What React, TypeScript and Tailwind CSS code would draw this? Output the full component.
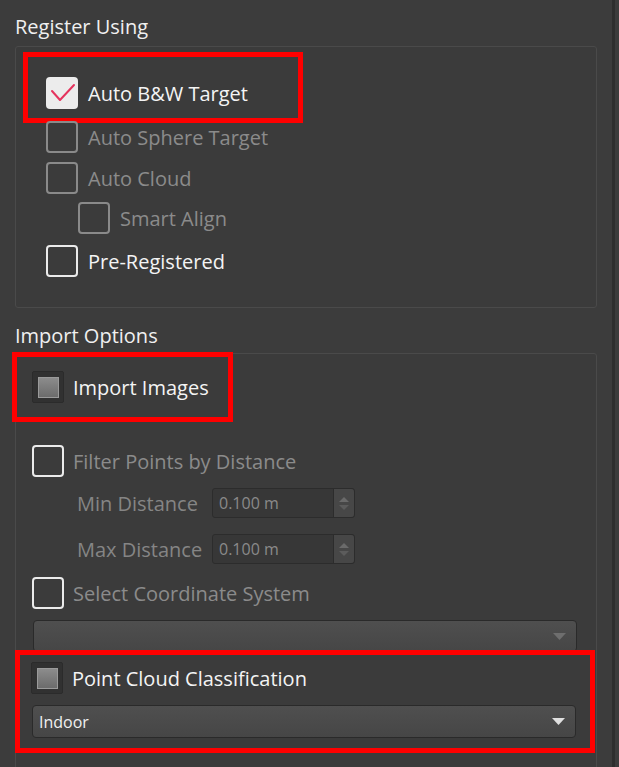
type BoxKind = "checked" | "on" | "off" | "partial";

const Box = ({ kind }: { kind: BoxKind }) => {
  if (kind === "checked") {
    return (
      <div className="w-[32px] h-[32px] shrink-0 rounded-[4px] bg-[#ececec]">
        <svg width="32" height="32" viewBox="0 0 32 32">
          <path d="M6 14 L14 23 L28 8" fill="none" stroke="#e5335d" strokeWidth="2" strokeLinecap="round" strokeLinejoin="round" />
        </svg>
      </div>
    );
  }
  if (kind === "partial") {
    return (
      <div className="w-[32px] h-[32px] shrink-0 rounded-[2px] bg-[#313131] border border-[#2b2b2b] flex items-center justify-center">
        <div className="w-[21px] h-[21px] border border-[#9a9a9a] bg-gradient-to-b from-[#8c8c8c] to-[#6c6c6c]" />
      </div>
    );
  }
  return (
    <div
      className={
        kind === "on"
          ? "w-[32px] h-[32px] shrink-0 rounded-[4px] border-[2.5px] border-[#ebebeb]"
          : "w-[32px] h-[32px] shrink-0 rounded-[4px] border-[2.5px] border-[#8a8a8a]"
      }
    />
  );
};

const Row = ({ kind, label, dim, className }: { kind: BoxKind; label: string; dim?: boolean; className?: string }) => (
  <div className={"flex items-center gap-[9px] h-[32px] " + (className ?? "")}>
    <Box kind={kind} />
    <span className={dim ? "text-[20px] leading-none pt-[2px] text-[#8b8b8b]" : "text-[20px] leading-none pt-[2px] text-[#f4f4f4]"}>{label}</span>
  </div>
);

const Spin = ({ label, className }: { label: string; className?: string }) => (
  <div className={"flex items-center ml-[61px] " + (className ?? "")}>
    <span className="w-[135px] text-[20px] leading-none pt-[2px] text-[#858585]">{label}</span>
    <div className="w-[143px] h-[30px] flex rounded-[3px] border border-[#2c2c2c] bg-[#373737]">
      <span className="flex-1 pl-[6px] text-[16px] leading-[28px] text-[#8a8a8a]">0.100 m</span>
      <div className="w-[21px] flex flex-col items-center justify-center gap-[3px] bg-[#474747] rounded-r-[3px] border-l border-[#2c2c2c]">
        <svg width="10" height="5" viewBox="0 0 10 5"><path d="M0 5 L5 0 L10 5 Z" fill="#6a6a6a" /></svg>
        <svg width="10" height="5" viewBox="0 0 10 5"><path d="M0 0 L5 5 L10 0 Z" fill="#5c5c5c" /></svg>
      </div>
    </div>
  </div>
);

const Select = ({ value, dim, className }: { value?: string; dim?: boolean; className?: string }) => (
  <div className={"w-[544px] flex items-center justify-between rounded-[4px] border border-[#2a2a2a] bg-gradient-to-b from-[#4f4f4f] to-[#464646] px-[6px] " + (className ?? "")}>
    <span className="text-[16px] leading-none text-[#f0f0f0]">{value ?? ""}</span>
    <svg width="13" height="7" viewBox="0 0 13 7" className="mr-[4px]">
      <path d="M0 0 L13 0 L6.5 7 Z" fill={dim ? "#6e6e6e" : "#e0e0e0"} />
    </svg>
  </div>
);

export default function App() {
  return (
    <div className="w-[619px] h-[767px] overflow-hidden bg-[#3c3c3c] flex font-['Open_Sans',sans-serif]">
      <div className="w-[612px] pl-[15px]">
        <div className="h-[46px] pt-[14px] text-[20px] leading-[26px] text-[#f0f0f0]">Register Using</div>

        <div className="w-[582px] h-[262px] rounded-[3px] border border-[#4a4a4a] bg-[#3b3b3b]">
          <div className="mt-[5px] ml-[7px] w-[280px] h-[71px] border-[5px] border-[#ff0000] pl-[18px] pt-[20px]">
            <Row kind="checked" label="Auto B&W Target" className="gap-[10px]" />
          </div>
          <Row kind="off" label="Auto Sphere Target" dim className="ml-[30px] mt-[-2px] gap-[10px]" />
          <Row kind="off" label="Auto Cloud" dim className="ml-[30px] mt-[9px] gap-[10px]" />
          <Row kind="off" label="Smart Align" dim className="ml-[62px] mt-[8px] gap-[10px]" />
          <Row kind="on" label="Pre-Registered" className="ml-[30px] mt-[11px] gap-[10px]" />
        </div>

        <div className="h-[45px] pt-[15px] text-[20px] leading-[26px] text-[#f0f0f0]">Import Options</div>

        <div className="w-[582px] h-[430px] rounded-[3px] border border-[#4a4a4a] bg-[#3b3b3b]">
          <div className="mt-[-2px] ml-[-4px] w-[221px] h-[70px] border-[5px] border-[#ff0000] pl-[15px] pt-[14px]">
            <Row kind="partial" label="Import Images" />
          </div>
          <Row kind="on" label="Filter Points by Distance" dim className="ml-[16px] mt-[23px]" />
          <Spin label="Min Distance" className="mt-[11px]" />
          <Spin label="Max Distance" className="mt-[16px]" />
          <Row kind="on" label="Select Coordinate System" dim className="ml-[16px] mt-[13px]" />
          <Select dim className="ml-[17px] mt-[11px] h-[32px]" />
          <div className="mt-[-2px] ml-[-1px] w-[580px] h-[103px] border-[5px] border-[#ff0000] pl-[11px] pt-[7px]">
            <Row kind="partial" label="Point Cloud Classification" />
            <Select value="Indoor" className="ml-[1px] mt-[11px] h-[33px]" />
          </div>
        </div>
      </div>
      <div className="w-[3px] bg-[#2e2e2e]" />
      <div className="flex-1" />
    </div>
  );
}
